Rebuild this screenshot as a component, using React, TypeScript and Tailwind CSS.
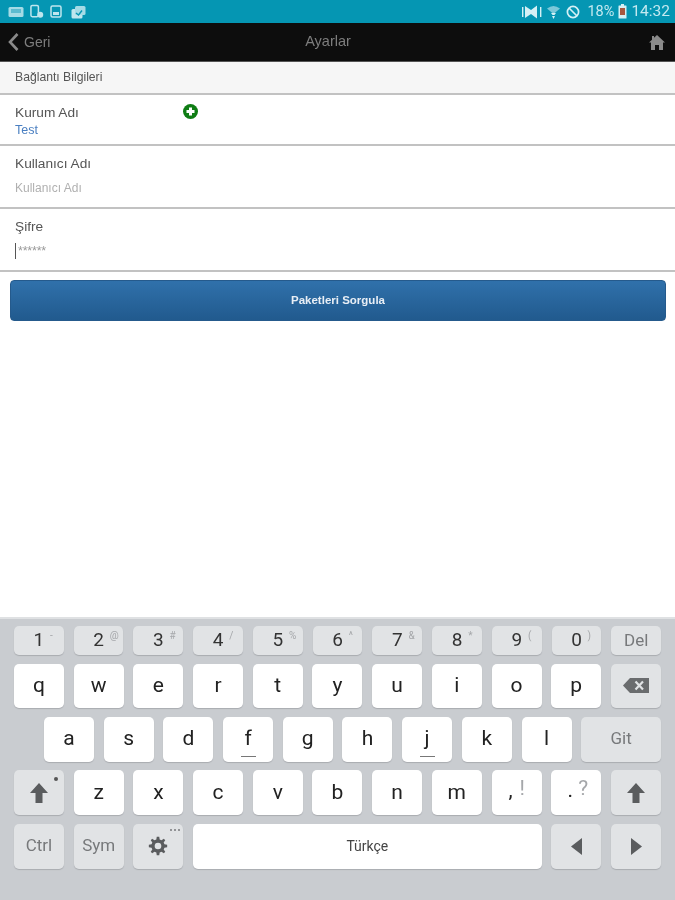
const ROBOTO = "font-['Roboto',sans-serif]";

function Key({
  label,
  sup,
  dark = false,
  className = "",
  children,
}: {
  label?: string;
  sup?: string;
  dark?: boolean;
  className?: string;
  children?: React.ReactNode;
}) {
  return (
    <div
      className={`relative flex items-center justify-center rounded-[5px] shadow-[0_1px_1px_#a9acb0] ${
        dark ? "bg-[#e1e3e5]" : "bg-white"
      } ${className}`}
    >
      {label && <span>{label}</span>}
      {sup && (
        <span className="absolute top-[3px] left-[36px] text-[10px] leading-[14px] text-[#a5a7aa]">{sup}</span>
      )}
      {children}
    </div>
  );
}

function Letter({ c, underline = false }: { c: string; underline?: boolean }) {
  return (
    <Key className="w-[50px] shrink-0 text-[21px] text-[#222]">
      <span>{c}</span>
      {underline && <span className="absolute bottom-[5px] left-[18px] h-px w-[15px] bg-[#777]" />}
    </Key>
  );
}

function ShiftIcon() {
  return (
    <svg width="18" height="20" viewBox="0 0 18 20" fill="#5a5c5e">
      <path d="M9 0 L18 10 H12.5 V20 H5.5 V10 H0 Z" />
    </svg>
  );
}

function StatusIcons() {
  return (
    <div className="flex items-center gap-[6px] pl-[8px]">
      <svg width="16" height="12" viewBox="0 0 16 12">
        <rect x="0.5" y="1" width="15" height="10" rx="1.5" fill="#a5dbe6" />
        <rect x="3" y="3" width="10" height="4" fill="#5cbbd0" />
      </svg>
      <svg width="14" height="15" viewBox="0 0 15 15" fill="none">
        <rect x="1" y="1" width="8" height="12" rx="1.5" stroke="#bfe6ee" strokeWidth="1.6" />
        <circle cx="11" cy="11" r="3.2" fill="#bfe6ee" />
      </svg>
      <svg width="12" height="13" viewBox="0 0 12 13" fill="none">
        <rect x="1" y="1" width="10" height="11" rx="1.5" stroke="#bfe6ee" strokeWidth="1.5" />
        <rect x="3" y="7" width="6" height="3" fill="#bfe6ee" />
      </svg>
      <svg width="15" height="14" viewBox="0 0 15 14" className="ml-[3px]">
        <rect x="0.5" y="4" width="11" height="9.5" rx="1.5" fill="#bfe6ee" />
        <rect x="4" y="1" width="10.5" height="9" rx="1.5" fill="#a5dbe6" />
        <path d="M5 8 L7.5 10 L11 5.5" stroke="#0596b3" strokeWidth="1.4" fill="none" />
      </svg>
    </div>
  );
}

function StatusRight() {
  return (
    <div className={`flex items-center pr-[5px] text-[#c4e9f0] ${ROBOTO}`}>
      <svg width="20" height="14" viewBox="0 0 20 14" className="mr-[5px]" fill="#d5f0f5">
        <rect x="0" y="2" width="1.4" height="10" />
        <rect x="18" y="2" width="1.4" height="10" />
        <path d="M3 1 L9 5 L15 0.5 V13.5 L9 9 L3 13 Z" />
      </svg>
      <svg width="13" height="14" viewBox="0 0 13 14" className="mr-[6px]">
        <path d="M0 3.5 Q6.5 -1.5 13 3.5 L6.5 9 Z" fill="#7cc8d9" />
        <path d="M4 8 H9 L7.5 10 H5.5 Z M5 11 H8 L6.5 14 Z" fill="#d5f0f5" />
      </svg>
      <svg width="14" height="14" viewBox="0 0 14 14" fill="none" stroke="#d5f0f5" strokeWidth="1.7" className="mr-[7px]">
        <circle cx="7" cy="7" r="5.6" />
        <path d="M3 3 L11 11" />
      </svg>
      <span className="text-[14.5px] leading-[23px]">18%</span>
      <svg width="9" height="15" viewBox="0 0 9 15" className="mx-[4px]">
        <rect x="0.5" y="1.5" width="8" height="13" rx="0.5" fill="#d5f0f5" />
        <rect x="3" y="0" width="3" height="2" fill="#d5f0f5" />
        <rect x="2" y="4" width="5" height="7" fill="#a8573f" />
      </svg>
      <span className="text-[15.5px] leading-[23px]">14:32</span>
    </div>
  );
}

function Field({
  label,
  children,
  className,
}: {
  label: string;
  children: React.ReactNode;
  className: string;
}) {
  return (
    <div className={`border-b-2 border-[#c2c2c2] bg-white pl-[15px] ${className}`}>
      <div className="text-[13.7px] leading-[16px] text-[#555]">{label}</div>
      {children}
    </div>
  );
}

export default function App() {
  return (
    <div className="flex h-[900px] w-[675px] flex-col overflow-hidden bg-white font-['Liberation_Sans',sans-serif] blur-[0.6px]">
      <div className="flex h-[23px] shrink-0 items-center justify-between bg-[#0596b3]">
        <StatusIcons />
        <StatusRight />
      </div>

      <div className="relative flex h-[38px] shrink-0 items-center justify-between bg-[#0d0d0d] pr-[10px] pl-[8px] text-[#7d7d7d]">
        <div className="flex items-center gap-[5px]">
          <svg width="11" height="18" viewBox="0 0 11 18" fill="none" stroke="#8a8a8a" strokeWidth="2.6">
            <path d="M9.5 1 L2 9 L9.5 17" />
          </svg>
          <span className="text-[14px]">Geri</span>
        </div>
        <span className="absolute inset-x-0 pr-[19px] text-center text-[14.5px]">Ayarlar</span>
        <svg width="16" height="15" viewBox="0 0 16 15" fill="#8a8a8a" className="relative">
          <path d="M8 0 L16 7.5 H14 V15 H10 V10 H6 V15 H2 V7.5 H0 L3 4.7 V1 H5 V2.8 Z" />
        </svg>
      </div>

      <div className="flex h-[34px] shrink-0 items-center border-b-2 border-t border-t-[#555] border-b-[#c2c2c2] bg-[#f6f6f6] pl-[15px] text-[12.2px] text-[#555]">
        Bağlantı Bilgileri
      </div>

      <Field label="Kurum Adı" className="relative h-[51px] shrink-0 pt-[10px]">
        <div className="mt-[2px] text-[12.5px] leading-[14px] text-[#4a7fc1]">Test</div>
        <svg width="15" height="15" viewBox="0 0 15 15" className="absolute top-[9px] left-[183px]">
          <circle cx="7.5" cy="7.5" r="7.5" fill="#0f7d14" />
          <path d="M6 3.5 H9 V6 H11.5 V9 H9 V11.5 H6 V9 H3.5 V6 H6 Z" fill="#fff" />
        </svg>
      </Field>

      <Field label="Kullanıcı Adı" className="h-[63px] shrink-0 pt-[10px]">
        <div className="mt-[9px] text-[12px] leading-[14px] text-[#b0b0b0]">Kullanıcı Adı</div>
      </Field>

      <Field label="Şifre" className="h-[63px] shrink-0 pt-[10px]">
        <div className="mt-[8px] flex items-center">
          <span className="h-[16px] w-px bg-[#555]" />
          <span className="ml-[2px] text-[12.5px] leading-[14px] tracking-[-0.2px] text-[#999]">******</span>
        </div>
      </Field>

      <div className="shrink-0 pt-[8px] pr-[9px] pl-[10px]">
        <div className="flex h-[41px] items-center justify-center rounded-[4px] border border-[#255a8c] bg-gradient-to-b from-[#3071ab] to-[#215a8e] text-[11.5px] font-bold text-[#e8eef5]">
          Paketleri Sorgula
        </div>
      </div>

      <div className="flex-1" />

      <div className={`flex h-[283px] shrink-0 flex-col gap-[8.5px] border-t-2 border-[#dfe1e3] bg-[#c9ccd0] px-[14px] pt-[7px] ${ROBOTO}`}>
        <div className="flex h-[29px] gap-[10px]">
          {[
            ["1", "-"],
            ["2", "@"],
            ["3", "#"],
            ["4", "/"],
            ["5", "%"],
            ["6", "^"],
            ["7", "&"],
            ["8", "*"],
            ["9", "("],
            ["0", ")"],
          ].map(([n, s]) => (
            <Key key={n} dark sup={s} label={n} className="flex-1 text-[19px] text-[#333]" />
          ))}
          <Key dark label="Del" className="flex-1 text-[17px] text-[#77797b]" />
        </div>

        <div className="flex h-[44.5px] gap-[9.7px]">
          {"qwertyuiop".split("").map((c) => (
            <Letter key={c} c={c} />
          ))}
          <Key dark className="flex-1">
            <svg width="26" height="15" viewBox="0 0 26 15" fill="#6a6c6e">
              <path d="M7 0 H26 V15 H7 L0 7.5 Z" />
              <path d="M12.5 3.5 L20 11.5 M20 3.5 L12.5 11.5" stroke="#e1e3e5" strokeWidth="2.2" />
            </svg>
          </Key>
        </div>

        <div className="flex h-[45px] gap-[9.7px] pl-[30px]">
          {"asdfghjkl".split("").map((c) => (
            <Letter key={c} c={c} underline={c === "f" || c === "j"} />
          ))}
          <Key dark label="Git" className="flex-1 text-[17px] text-[#77797b]" />
        </div>

        <div className="flex h-[45px] gap-[9.7px]">
          <Key dark className="w-[50px] shrink-0">
            <ShiftIcon />
            <span className="absolute top-[7px] right-[6px] size-[4px] rounded-full bg-[#555]" />
          </Key>
          {"zxcvbnm".split("").map((c) => (
            <Letter key={c} c={c} />
          ))}
          <Key className="w-[50px] shrink-0 text-[21px] text-[#222]">
            <span className="mr-[12px] -mt-[4px]">,</span>
            <span className="absolute top-[6px] left-[28px] text-[21px] leading-[24px] text-[#a5a7aa]">!</span>
          </Key>
          <Key className="w-[50px] shrink-0 text-[21px] text-[#222]">
            <span className="mr-[12px] -mt-[4px]">.</span>
            <span className="absolute top-[6px] left-[27px] text-[21px] leading-[24px] text-[#a5a7aa]">?</span>
          </Key>
          <Key dark className="flex-1">
            <ShiftIcon />
          </Key>
        </div>

        <div className="flex h-[45px] gap-[9.7px]">
          <Key dark label="Ctrl" className="w-[50px] shrink-0 text-[17px] text-[#77797b]" />
          <Key dark label="Sym" className="w-[50px] shrink-0 text-[17px] text-[#77797b]" />
          <Key dark className="w-[50px] shrink-0">
            <svg width="20" height="20" viewBox="0 0 24 24" fill="#5a5c5e">
              <path d="M13.5 1 L14 4.3 L16.2 5.2 L19 3.3 L20.7 5 L18.8 7.8 L19.7 10 L23 10.5 V13.5 L19.7 14 L18.8 16.2 L20.7 19 L19 20.7 L16.2 18.8 L14 19.7 L13.5 23 H10.5 L10 19.7 L7.8 18.8 L5 20.7 L3.3 19 L5.2 16.2 L4.3 14 L1 13.5 V10.5 L4.3 10 L5.2 7.8 L3.3 5 L5 3.3 L7.8 5.2 L10 4.3 L10.5 1 Z M12 8 A4 4 0 1 0 12 16 A4 4 0 1 0 12 8 Z" fillRule="evenodd" />
            </svg>
            <span className="absolute top-[5px] right-[3px] flex gap-[2px]">
              <span className="size-[2px] rounded-full bg-[#77797b]" />
              <span className="size-[2px] rounded-full bg-[#77797b]" />
              <span className="size-[2px] rounded-full bg-[#77797b]" />
            </span>
          </Key>
          <Key label="Türkçe" className="flex-1 text-[14px] text-[#444]" />
          <Key dark className="w-[50px] shrink-0">
            <svg width="11" height="17" viewBox="0 0 11 17" fill="#5a5c5e">
              <path d="M11 0 V17 L0 8.5 Z" />
            </svg>
          </Key>
          <Key dark className="w-[50px] shrink-0">
            <svg width="11" height="17" viewBox="0 0 11 17" fill="#5a5c5e">
              <path d="M0 0 V17 L11 8.5 Z" />
            </svg>
          </Key>
        </div>
      </div>
    </div>
  );
}
